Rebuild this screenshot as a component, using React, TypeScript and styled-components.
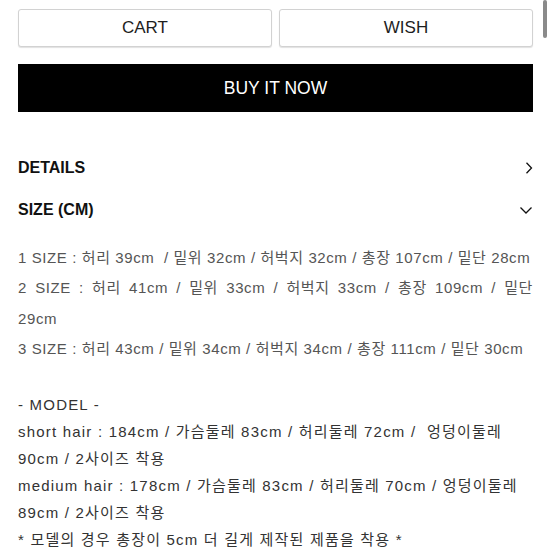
import {FC} from "react";
import styled, {createGlobalStyle} from "styled-components";

const GlobalStyle = createGlobalStyle`
  html, body {
    margin: 0;
    padding: 0;
    background: #fff;
  }

  body {
    font-family: "Liberation Sans", "Noto Sans CJK KR", sans-serif;
    -webkit-font-smoothing: antialiased;
  }
`;

const StyledPage = styled.div`
  position: relative;
  width: 552px;
  height: 552px;
  overflow: hidden;
  box-sizing: border-box;
  padding: 9px 19px 0 18px;
`;

const StyledScrollThumb = styled.div`
  position: absolute;
  top: 0;
  right: 5px;
  width: 4px;
  height: 38px;
  border-radius: 2px;
  background: #8a8a8a;
`;

const StyledButtonRow = styled.div`
  display: grid;
  grid-template-columns: 1fr 1fr;
  gap: 7px;
`;

const StyledOutlineButton = styled.button`
  height: 38px;
  border: 1px solid #d2d2d2;
  border-radius: 3px;
  background: #fff;
  box-shadow: 0 1px 1px rgba(0, 0, 0, 0.12);
  font-family: "Liberation Sans", sans-serif;
  font-size: 17px;
  color: #1e1e1e;
  padding: 0;
`;

const StyledBuyButton = styled.button`
  display: block;
  width: 100%;
  height: 48px;
  margin-top: 17px;
  border: none;
  background: #000;
  color: #fff;
  font-family: "Liberation Sans", sans-serif;
  font-size: 17.5px;
  padding: 0;
`;

const StyledSection = styled.div`
  margin-top: 35px;
`;

const StyledToggle = styled.div`
  display: flex;
  align-items: center;
  justify-content: space-between;
  height: 42px;
  font-size: 16px;
  font-weight: 700;
  color: #111;
`;

const StyledSizeBlock = styled.div`
  margin-top: 12px;
  font-size: 15px;
  line-height: 30.4px;
  letter-spacing: 0.6px;
  color: #555;
`;

const StyledLine = styled.div<{ $justify?: boolean }>`
  white-space: nowrap;
  text-align: ${p => (p.$justify ? "justify" : "left")};
  text-align-last: ${p => (p.$justify ? "justify" : "auto")};
`;

const StyledModelBlock = styled.div`
  margin-top: 26px;
  font-size: 15px;
  line-height: 27px;
  letter-spacing: 1.2px;
  color: #333;
`;

const ChevronRight: FC = () => (
    <svg width="14" height="14" viewBox="0 0 14 14">
        <path d="M7.5 1.8 L12.5 7 L7.5 12.2" fill="none" stroke="#111" strokeWidth="1.3"/>
    </svg>
);

const ChevronDown: FC = () => (
    <svg width="14" height="14" viewBox="0 0 14 14">
        <path d="M1.5 4.5 L7 10 L12.5 4.5" fill="none" stroke="#111" strokeWidth="1.3"/>
    </svg>
);

const sizeLines: { text: string, justify?: boolean }[] = [
    {text: "1 SIZE : 허리 39cm \u00a0/ 밑위 32cm / 허벅지 32cm / 총장 107cm / 밑단 28cm"},
    {text: "2 SIZE : 허리 41cm / 밑위 33cm / 허벅지 33cm / 총장 109cm / 밑단", justify: true},
    {text: "29cm"},
    {text: "3 SIZE : 허리 43cm / 밑위 34cm / 허벅지 34cm / 총장 111cm / 밑단 30cm"},
];

const modelLines: string[] = [
    "- MODEL -",
    "short hair : 184cm / 가슴둘레 83cm / 허리둘레 72cm / \u00a0엉덩이둘레",
    "90cm / 2사이즈 착용",
    "medium hair : 178cm / 가슴둘레 83cm / 허리둘레 70cm / 엉덩이둘레",
    "89cm / 2사이즈 착용",
    "* 모델의 경우 총장이 5cm 더 길게 제작된 제품을 착용 *",
];

const App: FC = () => {
    return (
        <>
            <GlobalStyle/>
            <StyledPage>
                <StyledScrollThumb/>
                <StyledButtonRow>
                    <StyledOutlineButton>CART</StyledOutlineButton>
                    <StyledOutlineButton>WISH</StyledOutlineButton>
                </StyledButtonRow>
                <StyledBuyButton>BUY IT NOW</StyledBuyButton>

                <StyledSection>
                    <StyledToggle>
                        <span>DETAILS</span>
                        <ChevronRight/>
                    </StyledToggle>
                    <StyledToggle>
                        <span>SIZE (CM)</span>
                        <ChevronDown/>
                    </StyledToggle>
                </StyledSection>

                <StyledSizeBlock>
                    {sizeLines.map((line, i) => (
                        <StyledLine key={i} $justify={line.justify}>{line.text}</StyledLine>
                    ))}
                </StyledSizeBlock>

                <StyledModelBlock>
                    {modelLines.map((line, i) => (
                        <StyledLine key={i}>{line}</StyledLine>
                    ))}
                </StyledModelBlock>
            </StyledPage>
        </>
    );
};

export default App;
